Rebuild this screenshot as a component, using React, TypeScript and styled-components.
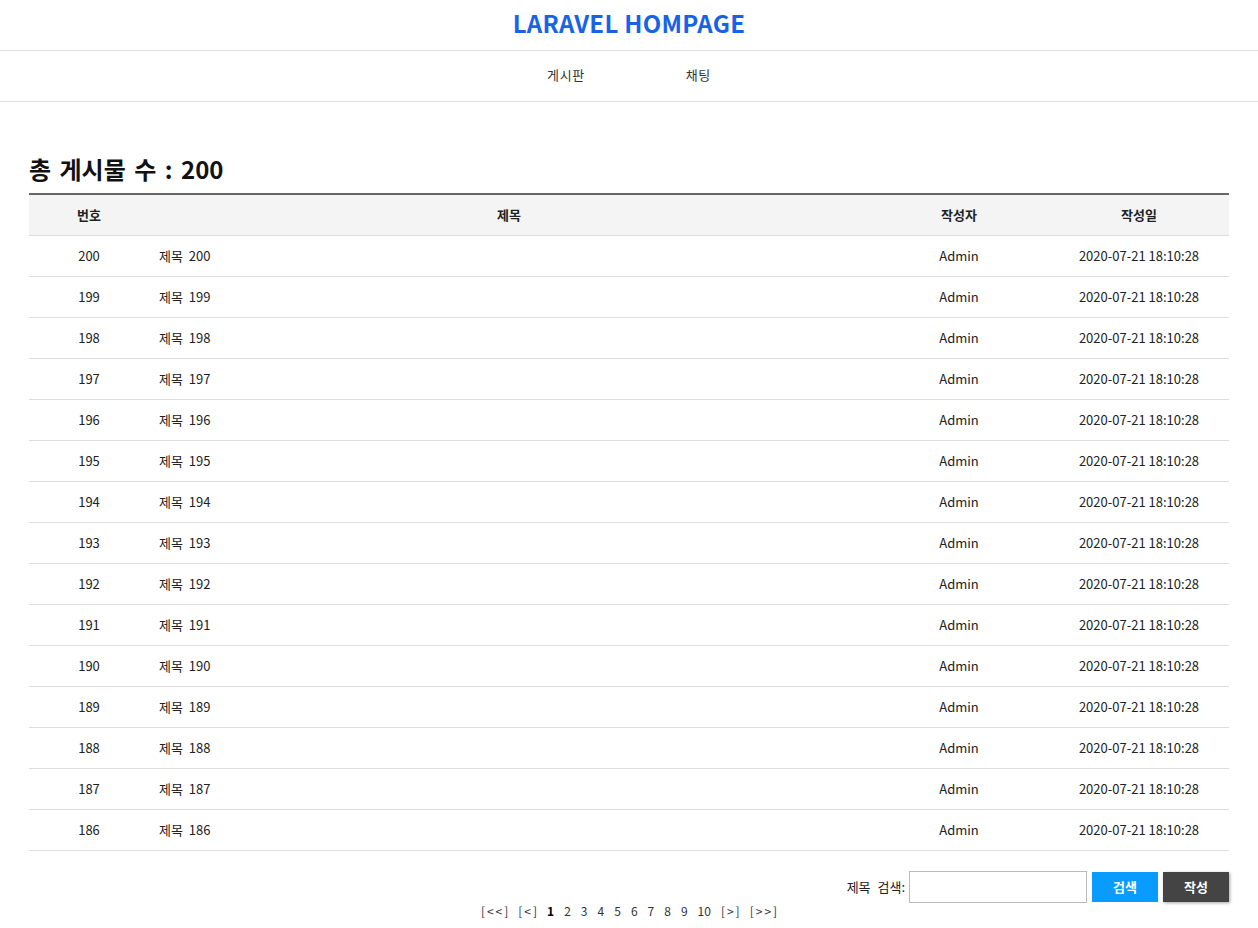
import React from "react";
import styled, { createGlobalStyle } from "styled-components";

const Global = createGlobalStyle`
  html, body { margin: 0; padding: 0; background: #fff; }
  body { font-family: "Noto Sans CJK KR", "Noto Sans", sans-serif; color: #222; }
  * { box-sizing: border-box; }
`;

const Header = styled.header`
  height: 51px;
  border-bottom: 1px solid #ddd;
  display: flex;
  align-items: center;
  justify-content: center;
`;

const Logo = styled.h1`
  margin: 0;
  font-size: 24px;
  font-weight: 700;
  color: #1763e8;
  letter-spacing: 0.3px;
  line-height: 1;
  padding-bottom: 4px;
`;

const Nav = styled.nav`
  height: 51px;
  border-bottom: 1px solid #ddd;
  display: flex;
  align-items: center;
  justify-content: center;
  gap: 101px;
`;

const NavItem = styled.a`
  font-size: 13px;
  letter-spacing: 0.6px;
  color: #333;
  text-decoration: none;
  padding-bottom: 3px;
`;

const Main = styled.main`
  width: 1200px;
  margin: 0 auto;
  padding-top: 50px;
`;

const Title = styled.h2`
  margin: 0 0 8px;
  font-size: 24px;
  font-weight: 700;
  color: #111;
  line-height: 33px;
  word-spacing: 3px;
`;

const Table = styled.table`
  width: 100%;
  border-collapse: collapse;
  border-top: 2px solid #666;
  font-size: 13px;
  table-layout: fixed;
`;

const Th = styled.th<{ $w: number }>`
  width: ${(p) => p.$w}px;
  height: 41px;
  background: #f4f4f4;
  font-weight: 700;
  color: #222;
  border-bottom: 1px solid #ddd;
  text-align: center;
  padding: 0;
`;

const Td = styled.td<{ $left?: boolean }>`
  height: 41px;
  border-bottom: 1px solid #ddd;
  text-align: ${(p) => (p.$left ? "left" : "center")};
  padding: 0 ${(p) => (p.$left ? "10px" : "0")};
  word-spacing: ${(p) => (p.$left ? "3px" : "0")};
  color: #222;
`;

const Footer = styled.div`
  display: flex;
  flex-direction: column;
  margin-top: 20px;
`;

const SearchRow = styled.form`
  display: flex;
  justify-content: flex-end;
  align-items: center;
  gap: 5px;
`;

const Label = styled.label`
  font-size: 13px;
  color: #222;
  margin-right: -1px;
  word-spacing: 4px;
`;

const Input = styled.input`
  width: 178px;
  height: 32px;
  border: 1px solid #bbb;
  padding: 0 6px;
  font-size: 13px;
`;

const Button = styled.button<{ $dark?: boolean }>`
  width: 66px;
  height: 30px;
  border: none;
  background: ${(p) => (p.$dark ? "#444" : "#0a9bff")};
  color: #fff;
  font-family: inherit;
  font-size: 13px;
  font-weight: 700;
  box-shadow: ${(p) => (p.$dark ? "1px 1px 3px rgba(0,0,0,0.35)" : "none")};
  cursor: pointer;
`;

const Pager = styled.div`
  display: flex;
  justify-content: center;
  gap: 10px;
  font-size: 12px;
  color: #333;
  line-height: 16px;
`;

const PageLink = styled.a<{ $active?: boolean; $arrow?: boolean }>`
  font-weight: ${(p) => (p.$active ? 700 : 400)};
  color: ${(p) => (p.$active ? "#000" : "#333")};
  text-decoration: none;
  letter-spacing: ${(p) => (p.$arrow ? "2px" : "0")};
  margin-right: ${(p) => (p.$arrow ? "-2px" : "0")};
`;

const rows = Array.from({ length: 15 }, (_, i) => 200 - i);

export default function App() {
  return (
    <>
      <Global />
      <Header>
        <Logo>LARAVEL HOMPAGE</Logo>
      </Header>
      <Nav>
        <NavItem href="#">게시판</NavItem>
        <NavItem href="#">채팅</NavItem>
      </Nav>
      <Main>
        <Title>총 게시물 수 : 200</Title>
        <Table>
          <thead>
            <tr>
              <Th $w={120}>번호</Th>
              <Th $w={720}>제목</Th>
              <Th $w={180}>작성자</Th>
              <Th $w={180}>작성일</Th>
            </tr>
          </thead>
          <tbody>
            {rows.map((n) => (
              <tr key={n}>
                <Td>{n}</Td>
                <Td $left>제목 {n}</Td>
                <Td>Admin</Td>
                <Td>2020-07-21 18:10:28</Td>
              </tr>
            ))}
          </tbody>
        </Table>
        <Footer>
          <SearchRow onSubmit={(e) => e.preventDefault()}>
            <Label>제목 검색:</Label>
            <Input type="text" />
            <Button type="submit">검색</Button>
            <Button type="button" $dark>작성</Button>
          </SearchRow>
          <Pager>
            <PageLink href="#" $arrow>[&lt;&lt;]</PageLink>
            <PageLink href="#" $arrow>[&lt;]</PageLink>
            {Array.from({ length: 10 }, (_, i) => i + 1).map((p) => (
              <PageLink key={p} href="#" $active={p === 1}>
                {p}
              </PageLink>
            ))}
            <PageLink href="#" $arrow>[&gt;]</PageLink>
            <PageLink href="#" $arrow>[&gt;&gt;]</PageLink>
          </Pager>
        </Footer>
      </Main>
    </>
  );
}
